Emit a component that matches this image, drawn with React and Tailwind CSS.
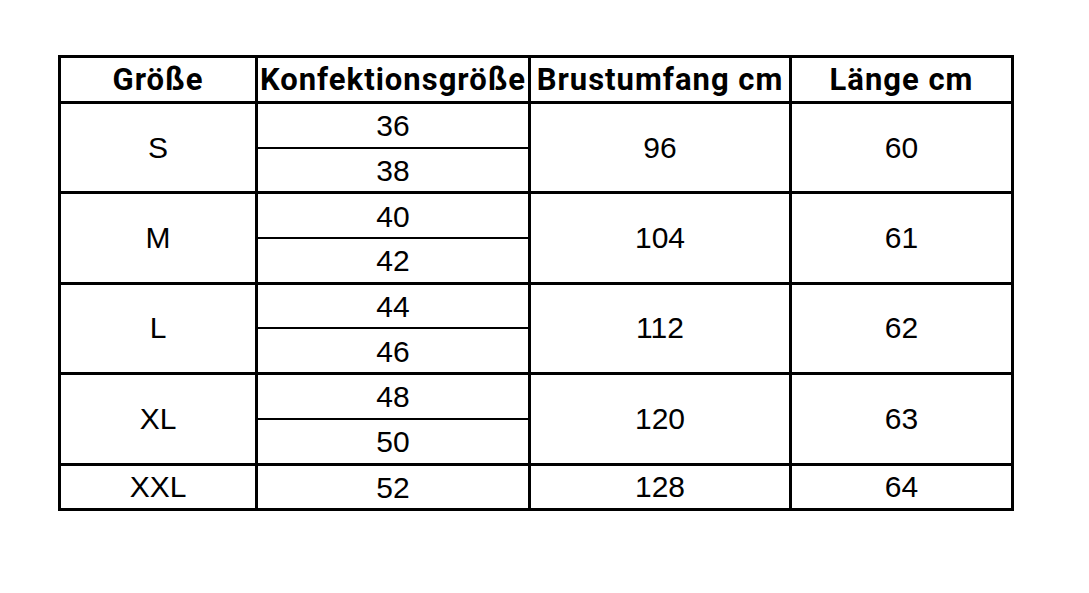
export default function App() {
  const groups = [
    { size: 'S', konf: ['36', '38'], brust: '96', laenge: '60' },
    { size: 'M', konf: ['40', '42'], brust: '104', laenge: '61' },
    { size: 'L', konf: ['44', '46'], brust: '112', laenge: '62' },
    { size: 'XL', konf: ['48', '50'], brust: '120', laenge: '63' },
    { size: 'XXL', konf: ['52'], brust: '128', laenge: '64' },
  ];

  const cell = 'border-[3px] border-black text-center align-middle p-0';

  return (
    <div className="w-[1089px] h-[593px] bg-white pt-[55px] pl-[58px]">
      <table
        className="border-collapse w-[953px] table-fixed text-black text-[30px] leading-none"
        style={{ fontFamily: '"Liberation Sans", Arial, sans-serif' }}
      >
        <colgroup>
          <col className="w-[197px]" />
          <col className="w-[273px]" />
          <col className="w-[261px]" />
          <col className="w-[222px]" />
        </colgroup>
        <thead>
          <tr className="h-[46px]">
            {['Größe', 'Konfektionsgröße', 'Brustumfang cm', 'Länge cm'].map((h) => (
              <th
                key={h}
                className={`${cell} font-bold text-[31px] tracking-[1px] whitespace-nowrap`}
                style={{ fontFamily: 'Roboto, "Liberation Sans", sans-serif' }}
              >
                {h}
              </th>
            ))}
          </tr>
        </thead>
        <tbody>
          {groups.map((g) =>
            g.konf.map((k, i) => (
              <tr key={g.size + k} className="h-[45.2px]">
                {i === 0 && (
                  <td rowSpan={g.konf.length} className={cell}>
                    {g.size}
                  </td>
                )}
                <td className={`${cell} ${g.konf.length > 1 ? (i === 0 ? 'border-b-2' : 'border-t-2') : ''}`}>
                  <span className="relative top-[1px]">{k}</span>
                </td>
                {i === 0 && (
                  <>
                    <td rowSpan={g.konf.length} className={cell}>
                      {g.brust}
                    </td>
                    <td rowSpan={g.konf.length} className={cell}>
                      {g.laenge}
                    </td>
                  </>
                )}
              </tr>
            ))
          )}
        </tbody>
      </table>
    </div>
  );
}
